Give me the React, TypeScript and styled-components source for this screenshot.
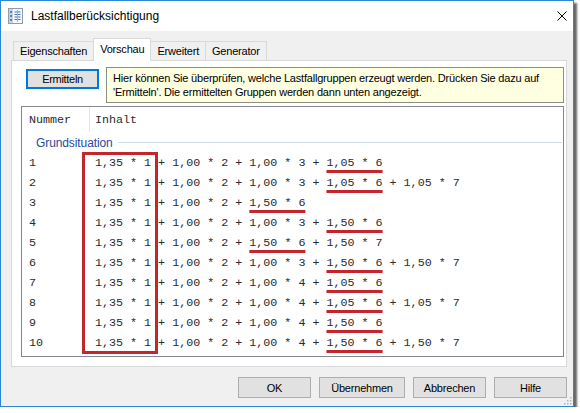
import React from "react";
import styled, { createGlobalStyle } from "styled-components";

const UI_FONT = `"Liberation Sans", Arial, sans-serif`;
const MONO_FONT = `"Liberation Mono", "Courier New", monospace`;
const MARK_RED = "#c4262e";

const GlobalStyle = createGlobalStyle`
  html, body {
    margin: 0;
    padding: 0;
    background: #ffffff;
  }
  * {
    box-sizing: border-box;
  }
`;

const Window = styled.div`
  position: relative;
  width: 574px;
  height: 407px;
  border: 1px solid #2b88d8;
  background: #f0f0f0;
  box-shadow: 3px 3px 2px rgba(0, 0, 0, 0.6);
  display: flex;
  flex-direction: column;
  font-family: ${UI_FONT};
  color: #000;
`;

const TitleBar = styled.div`
  height: 30px;
  background: #ffffff;
  display: flex;
  align-items: center;
  padding-left: 7px;
  gap: 8px;
`;

const Title = styled.span`
  font-size: 12px;
`;

const CloseButton = styled.div`
  margin-left: auto;
  width: 22px;
  height: 30px;
  display: flex;
  align-items: center;
  justify-content: center;
`;

const Content = styled.div`
  flex: 1;
  padding: 7px 6px 0 10px;
  display: flex;
  flex-direction: column;
`;

const TabStrip = styled.div`
  display: flex;
  align-items: flex-end;
  height: 22px;
  padding-left: 2px;
`;

const Tab = styled.div<{ $active?: boolean }>`
  position: relative;
  z-index: ${(p) => (p.$active ? 1 : 0)};
  height: ${(p) => (p.$active ? 23 : 19)}px;
  margin-bottom: ${(p) => (p.$active ? -1 : 0)}px;
  margin-left: -1px;
  padding: ${(p) => (p.$active ? "0 6px 3px" : "0 6px")};
  border: 1px solid #d9d9d9;
  border-bottom: none;
  background: ${(p) => (p.$active ? "#ffffff" : "#f0f0f0")};
  font-size: 11px;
  letter-spacing: -0.2px;
  display: flex;
  align-items: center;
  &:first-child {
    margin-left: 0;
  }
`;

const Panel = styled.div`
  height: 307px;
  border: 1px solid #d9d9d9;
  background: #ffffff;
  padding: 6px 2px 0 9px;
  display: flex;
  flex-direction: column;
`;

const TopRow = styled.div`
  display: flex;
  align-items: flex-start;
`;

const DefaultButton = styled.div`
  margin: 2px 0 0 5px;
  width: 73px;
  height: 20px;
  border: 1px solid #0078d7;
  box-shadow: inset 0 0 0 1px #0078d7;
  background: #e1e1e1;
  font-size: 11px;
  letter-spacing: -0.3px;
  display: flex;
  align-items: center;
  justify-content: center;
`;

const InfoBox = styled.div`
  flex: 1;
  margin-left: 7px;
  height: 36px;
  border: 1px solid #8e8e82;
  background: #ffffe1;
  padding: 3px 6px;
  font-size: 11px;
  line-height: 14px;
  letter-spacing: -0.2px;
  white-space: nowrap;
`;

const ListView = styled.div`
  position: relative;
  margin-top: 3px;
  height: 251px;
  border: 1px solid #828790;
  font-family: ${MONO_FONT};
  font-size: 11.7px;
  color: #2b2b2b;
`;

const HeaderRow = styled.div`
  display: grid;
  grid-template-columns: 68px 1fr;
  height: 25px;
`;

const HeaderCell = styled.div<{ $divider?: boolean }>`
  display: flex;
  align-items: center;
  padding-left: ${(p) => (p.$divider ? 7 : 5)}px;
  border-right: ${(p) => (p.$divider ? "1px solid #e5e5e5" : "none")};
`;

const GroupRow = styled.div`
  height: 21px;
  display: flex;
  align-items: center;
  gap: 5px;
  padding: 0 1px 0 14px;
  font-family: ${UI_FONT};
  font-size: 12px;
  letter-spacing: -0.1px;
  color: #2a4a9e;
  &::after {
    content: "";
    flex: 1;
    height: 1px;
    background: #d5dbe5;
  }
`;

const Row = styled.div`
  display: grid;
  grid-template-columns: 68px 1fr;
  height: 20px;
  align-items: center;
  white-space: pre;
`;

const NumberCell = styled.div`
  padding-left: 7px;
`;

const ContentCell = styled.div`
  padding-left: 5px;
`;

const Mark = styled.span`
  text-decoration: underline;
  text-decoration-color: ${MARK_RED};
  text-decoration-thickness: 3px;
  text-underline-offset: 4px;
  text-decoration-skip-ink: none;
`;

const RedFrame = styled.div`
  position: absolute;
  left: 60px;
  top: 45px;
  width: 76px;
  height: 202px;
  border: 3px solid ${MARK_RED};
  pointer-events: none;
`;

const Footer = styled.div`
  display: flex;
  justify-content: flex-end;
  gap: 8px;
  margin-top: 10px;
`;

const DialogButton = styled.div<{ $w?: number }>`
  width: ${(p) => p.$w ?? 73}px;
  height: 21px;
  border: 1px solid #adadad;
  background: #e1e1e1;
  font-size: 11px;
  letter-spacing: -0.2px;
  display: flex;
  align-items: center;
  justify-content: center;
`;

const Grip = styled.svg`
  position: absolute;
  right: 1px;
  bottom: 1px;
`;

const AppIcon = () => (
  <svg width="15" height="16" viewBox="0 0 15 16">
    <rect x="0.5" y="0.5" width="14" height="15" fill="#f4f7fb" stroke="#8a9bb3" />
    <rect x="1" y="1" width="4" height="14" fill="#c9d3df" />
    <rect x="2" y="3" width="2" height="2" fill="#6a7c95" />
    <rect x="2" y="7" width="2" height="2" fill="#6a7c95" />
    <rect x="2" y="11" width="2" height="2" fill="#6a7c95" />
    <path d="M6.5 4h6M6.5 6.5h6M6.5 9h6M6.5 11.5h6" stroke="#4b74b0" strokeWidth="1" />
    <path d="M9.5 2v12" stroke="#9fb2cc" strokeWidth="1" />
  </svg>
);

const CloseIcon = () => (
  <svg width="10" height="10" viewBox="0 0 10 10">
    <path d="M0.5 0.5L9.5 9.5M9.5 0.5L0.5 9.5" stroke="#000" strokeWidth="1" />
  </svg>
);

type Combination = { head: string; mark: string; tail: string };

const STEM_3 = "1,35 * 1 + 1,00 * 2 + 1,00 * 3 + ";
const STEM_4 = "1,35 * 1 + 1,00 * 2 + 1,00 * 4 + ";
const STEM_2 = "1,35 * 1 + 1,00 * 2 + ";

const combinations: Combination[] = [
  { head: STEM_3, mark: "1,05 * 6", tail: "" },
  { head: STEM_3, mark: "1,05 * 6", tail: " + 1,05 * 7" },
  { head: STEM_2, mark: "1,50 * 6", tail: "" },
  { head: STEM_3, mark: "1,50 * 6", tail: "" },
  { head: STEM_2, mark: "1,50 * 6", tail: " + 1,50 * 7" },
  { head: STEM_3, mark: "1,50 * 6", tail: " + 1,50 * 7" },
  { head: STEM_4, mark: "1,05 * 6", tail: "" },
  { head: STEM_4, mark: "1,05 * 6", tail: " + 1,05 * 7" },
  { head: STEM_4, mark: "1,50 * 6", tail: "" },
  { head: STEM_4, mark: "1,50 * 6", tail: " + 1,50 * 7" },
];

const tabs = ["Eigenschaften", "Vorschau", "Erweitert", "Generator"];

export default function App() {
  return (
    <>
      <GlobalStyle />
      <Window>
        <TitleBar>
          <AppIcon />
          <Title>Lastfallberücksichtigung</Title>
          <CloseButton>
            <CloseIcon />
          </CloseButton>
        </TitleBar>

        <Content>
          <TabStrip>
            {tabs.map((t) => (
              <Tab key={t} $active={t === "Vorschau"}>
                {t}
              </Tab>
            ))}
          </TabStrip>

          <Panel>
            <TopRow>
              <DefaultButton>Ermitteln</DefaultButton>
              <InfoBox>
                Hier können Sie überprüfen, welche Lastfallgruppen erzeugt werden. Drücken Sie dazu auf
                <br />
                'Ermitteln'. Die ermittelten Gruppen werden dann unten angezeigt.
              </InfoBox>
            </TopRow>

            <ListView>
              <HeaderRow>
                <HeaderCell $divider>Nummer</HeaderCell>
                <HeaderCell>Inhalt</HeaderCell>
              </HeaderRow>
              <GroupRow>Grundsituation</GroupRow>
              {combinations.map((c, i) => (
                <Row key={i}>
                  <NumberCell>{i + 1}</NumberCell>
                  <ContentCell>
                    {c.head}
                    <Mark>{c.mark}</Mark>
                    {c.tail}
                  </ContentCell>
                </Row>
              ))}
              <RedFrame />
            </ListView>
          </Panel>

          <Footer>
            <DialogButton>OK</DialogButton>
            <DialogButton $w={86}>Übernehmen</DialogButton>
            <DialogButton>Abbrechen</DialogButton>
            <DialogButton>Hilfe</DialogButton>
          </Footer>
        </Content>

        <Grip width="8" height="8" viewBox="0 0 8 8">
          <rect x="6" y="0" width="1.5" height="1.5" fill="#b5b5b5" />
          <rect x="3" y="3" width="1.5" height="1.5" fill="#b5b5b5" />
          <rect x="6" y="3" width="1.5" height="1.5" fill="#b5b5b5" />
          <rect x="0" y="6" width="1.5" height="1.5" fill="#b5b5b5" />
          <rect x="3" y="6" width="1.5" height="1.5" fill="#b5b5b5" />
          <rect x="6" y="6" width="1.5" height="1.5" fill="#b5b5b5" />
        </Grip>
      </Window>
    </>
  );
}
